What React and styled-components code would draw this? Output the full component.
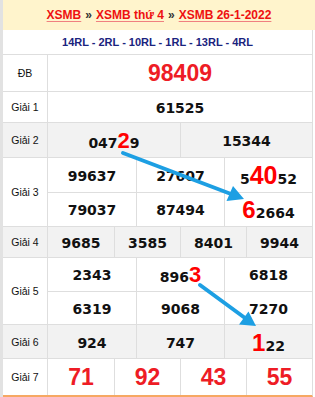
import React from "react";
import styled, { createGlobalStyle } from "styled-components";

const GlobalStyle = createGlobalStyle`
  html, body {
    margin: 0;
    padding: 0;
    background: #fff;
  }
  body {
    font-family: "Liberation Sans", Arial, sans-serif;
  }
`;

const Page = styled.div`
  position: relative;
  width: 315px;
  height: 397px;
  box-sizing: border-box;
  border-left: 3px solid #e2e2e2;
  overflow: hidden;
`;

const Header = styled.div`
  height: 30px;
  display: flex;
  align-items: center;
  justify-content: center;
  background: #fff4cc;
  font-size: 12px;
  font-weight: bold;
  color: #333;
  gap: 4px;
  padding-bottom: 1px;
  box-sizing: border-box;
`;

const HeadLink = styled.a`
  color: #ee1111;
  text-decoration: underline;
  text-decoration-color: #f08080;
  text-underline-offset: 2px;
`;

const Table = styled.div`
  width: 310px;
  border-right: 1px solid #dedede;
  border-bottom: 2px solid #f6a863;
  box-sizing: border-box;
`;

const RlRow = styled.div`
  height: 25px;
  display: flex;
  align-items: center;
  justify-content: center;
  border-bottom: 1px solid #dedede;
  box-sizing: border-box;
  font-size: 11px;
  font-weight: bold;
  color: #1a237e;
`;

const Row = styled.div`
  display: grid;
  grid-template-columns: 45px 1fr;
  height: ${(p) => p.$h}px;
  background: ${(p) => (p.$gray ? "#f2f2f2" : "#fff")};
  border-bottom: ${(p) => (p.$last ? "none" : "1px solid #dedede")};
  box-sizing: border-box;
`;

const Label = styled.div`
  display: flex;
  align-items: center;
  justify-content: center;
  border-right: 1px solid #dedede;
  font-size: 10.5px;
  color: #111;
`;

const Values = styled.div`
  display: flex;
  flex-direction: column;
`;

const SubRow = styled.div`
  flex: 1;
  display: grid;
  grid-template-columns: repeat(${(p) => p.$cols}, 1fr);
  & + & {
    border-top: 1px solid #dedede;
  }
`;

const Cell = styled.div`
  display: flex;
  align-items: center;
  justify-content: center;
  & + & {
    border-left: 1px solid #dedede;
  }
`;

const Num = styled.span`
  font-family: "DejaVu Sans", Verdana, sans-serif;
  font-weight: bold;
  font-size: 14px;
  color: #111;
  white-space: nowrap;
  padding-top: 2px;
`;

const Hot = styled.span`
  font-family: "Liberation Sans", Arial, sans-serif;
  font-size: ${(p) => p.$size}px;
  color: #ff0000;
  line-height: 1;
`;

const BigRed = styled.span`
  font-family: "Liberation Sans", Arial, sans-serif;
  font-weight: bold;
  font-size: ${(p) => p.$size}px;
  color: #ee1c25;
`;

const Arrows = styled.svg`
  position: absolute;
  top: 0;
  left: -3px;
  pointer-events: none;
`;

const Number = ({ value, hot }) => {
  if (!hot) return <Num>{value}</Num>;
  const [start, len, size] = hot;
  return (
    <Num>
      {value.slice(0, start)}
      <Hot $size={size}>{value.slice(start, start + len)}</Hot>
      {value.slice(start + len)}
    </Num>
  );
};

const prizes = [
  { label: "Giải 1", h: 31, rows: [[["61525"]]] },
  { label: "Giải 2", h: 35, gray: true, rows: [[["04729", [3, 1, 22]], ["15344"]]] },
  {
    label: "Giải 3",
    h: 69,
    rows: [
      [["99637"], ["27607"], ["54052", [1, 2, 25]]],
      [["79037"], ["87494"], ["62664", [0, 1, 24]]],
    ],
  },
  { label: "Giải 4", h: 31, gray: true, rows: [[["9685"], ["3585"], ["8401"], ["9944"]]] },
  {
    label: "Giải 5",
    h: 67,
    rows: [
      [["2343"], ["8963", [3, 1, 22]], ["6818"]],
      [["6319"], ["9068"], ["7270"]],
    ],
  },
  { label: "Giải 6", h: 34, gray: true, rows: [[["924"], ["747"], ["122", [0, 1, 24]]]] },
];

const App = () => {
  return (
    <>
      <GlobalStyle />
      <Page>
        <Header>
          <HeadLink>XSMB</HeadLink>
          <span>»</span>
          <HeadLink>XSMB thứ 4</HeadLink>
          <span>»</span>
          <HeadLink>XSMB 26-1-2022</HeadLink>
        </Header>
        <Table>
          <RlRow>14RL - 2RL - 10RL - 1RL - 13RL - 4RL</RlRow>
          <Row $h={37}>
            <Label>ĐB</Label>
            <Values>
              <SubRow $cols={1}>
                <Cell>
                  <BigRed $size={23}>98409</BigRed>
                </Cell>
              </SubRow>
            </Values>
          </Row>
          {prizes.map((p) => (
            <Row key={p.label} $h={p.h} $gray={p.gray}>
              <Label>{p.label}</Label>
              <Values>
                {p.rows.map((r, i) => (
                  <SubRow key={i} $cols={r.length}>
                    {r.map(([v, hot], j) => (
                      <Cell key={j}>
                        <Number value={v} hot={hot} />
                      </Cell>
                    ))}
                  </SubRow>
                ))}
              </Values>
            </Row>
          ))}
          <Row $h={36} $last>
            <Label>Giải 7</Label>
            <Values>
              <SubRow $cols={4}>
                {["71", "92", "43", "55"].map((n) => (
                  <Cell key={n}>
                    <BigRed $size={23}>{n}</BigRed>
                  </Cell>
                ))}
              </SubRow>
            </Values>
          </Row>
        </Table>
        <Arrows width="315" height="397" viewBox="0 0 315 397">
          <g stroke="#1d9fe3" strokeWidth="4" strokeLinecap="round" fill="#1d9fe3">
            <line x1="123" y1="153" x2="231" y2="194" />
            <polygon points="244,199 226.5,201 233,186" stroke="none" />
            <line x1="200" y1="285" x2="245" y2="318" />
            <polygon points="256,326 239,324.5 248.5,311.5" stroke="none" />
          </g>
        </Arrows>
      </Page>
    </>
  );
};

export default App;
